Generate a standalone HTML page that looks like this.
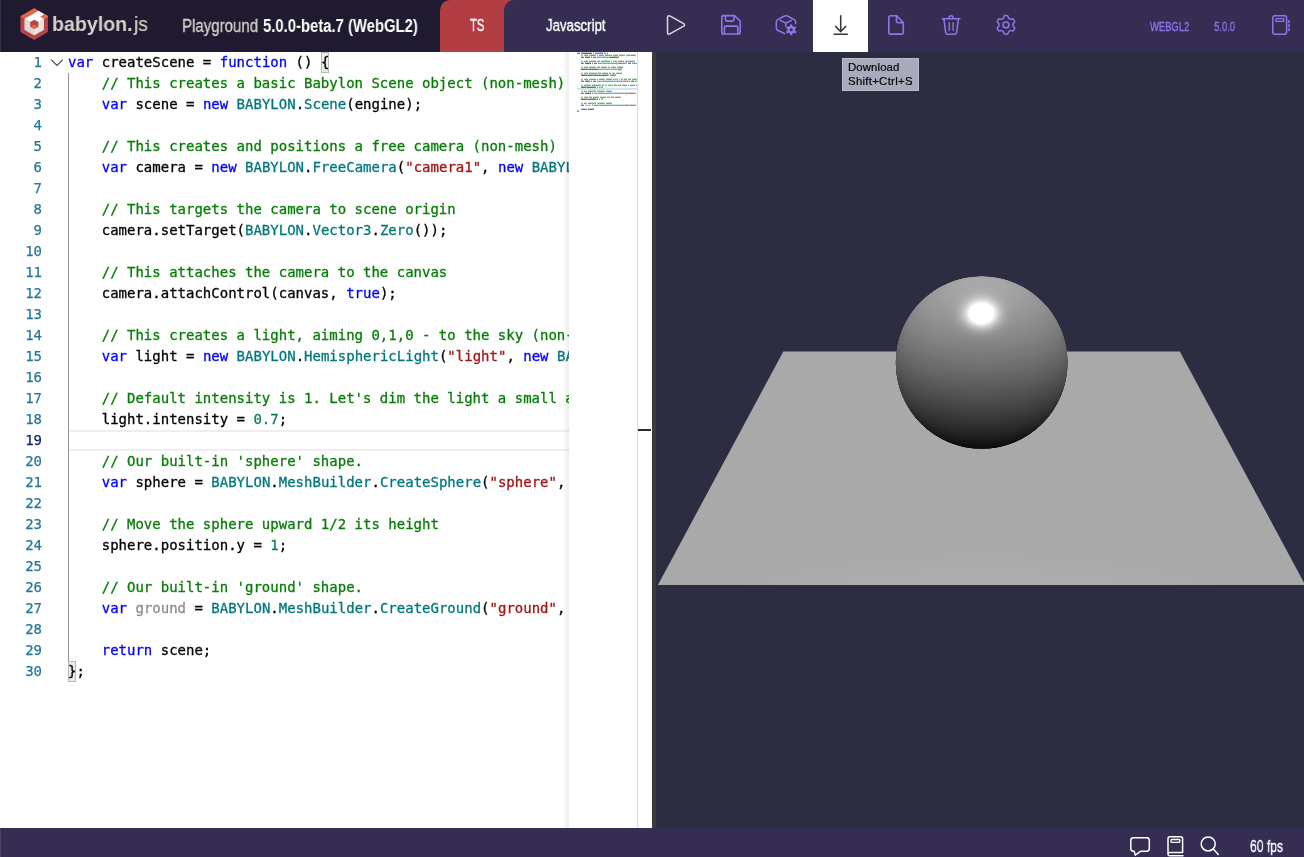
<!DOCTYPE html>
<html lang="en"><head><meta charset="utf-8"><title>Babylon.js Playground</title>
<style>
*{box-sizing:border-box}
html,body{margin:0;padding:0}
body{width:1304px;height:857px;overflow:hidden;background:#fff;position:relative;font-family:"Liberation Sans",sans-serif}
.abs{position:absolute}
#hdr{left:0;top:0;width:1304px;height:52px;background:#1f1a2f}
#ts{left:440px;top:0;width:80px;height:52px;background:#b23e44;border-top-left-radius:10px}
#js{left:504px;top:0;width:800px;height:52px;background:#362d52;border-top-left-radius:10px}
#dl{left:813px;top:0;width:55px;height:52px;background:#fff}
#ftr{left:0;top:828px;width:1304px;height:29px;background:#362d52}
#split{left:652px;top:52px;width:4px;height:776px;background:#3b3b3b}
#canvas{left:656px;top:52px;width:648px;height:776px;background:#2d2d42;overflow:hidden}
.scene{position:absolute;left:0;top:0}
#ed{left:0;top:52px;width:652px;height:776px;background:#fff;overflow:hidden}
#nums{left:0;top:0;width:42px;font:14px/21px "DejaVu Sans Mono",monospace;text-align:right;color:#237893;will-change:transform;-webkit-text-stroke:0.25px}
.num{height:21px}
.num.cur{color:#0b216f}
#code{left:68px;top:0;width:501px;height:776px;overflow:hidden;font:14px/21px "DejaVu Sans Mono",monospace;color:#000;will-change:transform;-webkit-text-stroke:0.3px}
.ln{height:21px;white-space:pre}
.c{color:#087d08}.s{color:#a31515}.n{color:#097d55}.k{color:#0000ff}.t{color:#00787c}.f{color:#8c8c8c}
#guide{left:68px;top:21px;width:1px;height:588px;background:#939393}
#curline{left:68px;top:378px;width:501px;height:21px;border-top:2px solid #eee;border-bottom:2px solid #eee}
.brk{width:8.4px;height:21px;background:#e5efe5;border:1px solid #b9b9b9}
#mmshadow{left:563px;top:0;width:6px;height:776px;background:linear-gradient(to right,rgba(0,0,0,0),rgba(0,0,0,0.07))}
#mm{left:569px;top:0;width:69px;height:776px;background:#fff}
.minimap{position:absolute;left:8px;top:0}
#mmcur{left:8px;top:36px;width:60px;height:2px;background:#cfe3fb}
#mmtext{position:absolute;left:8px;top:0.2px;width:506px;height:360px;overflow:hidden;font:bold 14px/12px "DejaVu Sans Mono",monospace;color:#000;transform-origin:0 0;transform:scale(0.11862,0.16667);will-change:transform;-webkit-text-stroke:0.8px;opacity:0.62}
#mmtext .ln{height:12px}
#ovr{left:637px;top:0;width:15px;height:776px;border-left:1px solid #dcdcdc;background:#fff}
#ovrcur{left:0px;top:377px;width:13px;height:2px;background:#2a2a2a}
.tx{position:absolute;white-space:pre;line-height:1;transform-origin:0 0;display:inline-block;will-change:transform}
#tip{left:842px;top:58px;width:77px;height:33px;background:#aaaabd;border:1px solid #bdbdcc;font:11.4px/14.2px "Liberation Sans",sans-serif;color:#000;padding:1.2px 0 0 4.9px;white-space:pre}
#tip span{display:block;will-change:transform;-webkit-text-stroke:0.2px}
svg.ic{position:absolute;overflow:visible}
</style></head>
<body>
<div id="hdr" class="abs"></div>

<div id="ts" class="abs"></div>
<div id="js" class="abs"></div>
<div id="dl" class="abs"></div>
<div id="ed" class="abs">
 <div id="curline" class="abs"></div>
 <div class="brk abs" style="left:320.9px;top:0"></div>
 <div class="brk abs" style="left:68px;top:609px"></div>
 <div id="nums" class="abs">
<div class="num">1</div>
<div class="num">2</div>
<div class="num">3</div>
<div class="num">4</div>
<div class="num">5</div>
<div class="num">6</div>
<div class="num">7</div>
<div class="num">8</div>
<div class="num">9</div>
<div class="num">10</div>
<div class="num">11</div>
<div class="num">12</div>
<div class="num">13</div>
<div class="num">14</div>
<div class="num">15</div>
<div class="num">16</div>
<div class="num">17</div>
<div class="num">18</div>
<div class="num cur">19</div>
<div class="num">20</div>
<div class="num">21</div>
<div class="num">22</div>
<div class="num">23</div>
<div class="num">24</div>
<div class="num">25</div>
<div class="num">26</div>
<div class="num">27</div>
<div class="num">28</div>
<div class="num">29</div>
<div class="num">30</div>
 </div>
 <div id="guide" class="abs"></div>
 <div id="code" class="abs">
<div class="ln"><span class="k">var</span> createScene = <span class="k">function</span> () {</div>
<div class="ln">    <span class="c">// This creates a basic Babylon Scene object (non-mesh)</span></div>
<div class="ln">    <span class="k">var</span> scene = <span class="k">new</span> <span class="t">BABYLON</span>.<span class="t">Scene</span>(engine);</div>
<div class="ln"></div>
<div class="ln">    <span class="c">// This creates and positions a free camera (non-mesh)</span></div>
<div class="ln">    <span class="k">var</span> camera = <span class="k">new</span> <span class="t">BABYLON</span>.<span class="t">FreeCamera</span>(<span class="s">"camera1"</span>, <span class="k">new</span> <span class="t">BABYLON</span>.<span class="t">Vector3</span>(<span class="n">0</span>, <span class="n">5</span>, -<span class="n">10</span>), scene);</div>
<div class="ln"></div>
<div class="ln">    <span class="c">// This targets the camera to scene origin</span></div>
<div class="ln">    camera.setTarget(<span class="t">BABYLON</span>.<span class="t">Vector3</span>.<span class="t">Zero</span>());</div>
<div class="ln"></div>
<div class="ln">    <span class="c">// This attaches the camera to the canvas</span></div>
<div class="ln">    camera.attachControl(canvas, <span class="k">true</span>);</div>
<div class="ln"></div>
<div class="ln">    <span class="c">// This creates a light, aiming 0,1,0 - to the sky (non-mesh)</span></div>
<div class="ln">    <span class="k">var</span> light = <span class="k">new</span> <span class="t">BABYLON</span>.<span class="t">HemisphericLight</span>(<span class="s">"light"</span>, <span class="k">new</span> <span class="t">BABYLON</span>.<span class="t">Vector3</span>(<span class="n">0</span>, <span class="n">1</span>, <span class="n">0</span>), scene);</div>
<div class="ln"></div>
<div class="ln">    <span class="c">// Default intensity is 1. Let's dim the light a small amount</span></div>
<div class="ln">    light.intensity = <span class="n">0.7</span>;</div>
<div class="ln"></div>
<div class="ln">    <span class="c">// Our built-in 'sphere' shape.</span></div>
<div class="ln">    <span class="k">var</span> sphere = <span class="t">BABYLON</span>.<span class="t">MeshBuilder</span>.<span class="t">CreateSphere</span>(<span class="s">"sphere"</span>, {diameter: <span class="n">2</span>, segments: <span class="n">32</span>}, scene);</div>
<div class="ln"></div>
<div class="ln">    <span class="c">// Move the sphere upward 1/2 its height</span></div>
<div class="ln">    sphere.position.y = <span class="n">1</span>;</div>
<div class="ln"></div>
<div class="ln">    <span class="c">// Our built-in 'ground' shape.</span></div>
<div class="ln">    <span class="k">var</span> <span class="f">ground</span> = <span class="t">BABYLON</span>.<span class="t">MeshBuilder</span>.<span class="t">CreateGround</span>(<span class="s">"ground"</span>, {width: <span class="n">6</span>, height: <span class="n">6</span>}, scene);</div>
<div class="ln"></div>
<div class="ln">    <span class="k">return</span> scene;</div>
<div class="ln">};</div>
 </div>
 <svg class="ic" style="left:50px;top:6px" width="14" height="10" viewBox="0 0 14 10"><path d="M1.2 1.6 L7 7.4 L12.8 1.6" fill="none" stroke="#424242" stroke-width="1.1"/></svg>
 <div id="mmshadow" class="abs"></div>
 <div id="mm" class="abs"><svg class="minimap" width="60" height="776" viewBox="0 0 60 776"><g opacity="0.3"><rect x="0" y="0.4" width="3" height="1.5" fill="#0000ff"/><rect x="4" y="0.4" width="11" height="1.5" fill="#000000"/><rect x="16" y="0.4" width="1" height="1.5" fill="#000000"/><rect x="18" y="0.4" width="8" height="1.5" fill="#0000ff"/><rect x="27" y="0.4" width="2" height="1.5" fill="#000000"/><rect x="30" y="0.4" width="1" height="1.5" fill="#000000"/><rect x="4" y="2.4" width="2" height="1.5" fill="#008000"/><rect x="7" y="2.4" width="4" height="1.5" fill="#008000"/><rect x="12" y="2.4" width="7" height="1.5" fill="#008000"/><rect x="20" y="2.4" width="1" height="1.5" fill="#008000"/><rect x="22" y="2.4" width="5" height="1.5" fill="#008000"/><rect x="28" y="2.4" width="7" height="1.5" fill="#008000"/><rect x="36" y="2.4" width="5" height="1.5" fill="#008000"/><rect x="42" y="2.4" width="6" height="1.5" fill="#008000"/><rect x="49" y="2.4" width="10" height="1.5" fill="#008000"/><rect x="4" y="4.4" width="3" height="1.5" fill="#0000ff"/><rect x="8" y="4.4" width="5" height="1.5" fill="#000000"/><rect x="14" y="4.4" width="1" height="1.5" fill="#000000"/><rect x="16" y="4.4" width="3" height="1.5" fill="#0000ff"/><rect x="20" y="4.4" width="7" height="1.5" fill="#008080"/><rect x="27" y="4.4" width="1" height="1.5" fill="#000000"/><rect x="28" y="4.4" width="5" height="1.5" fill="#008080"/><rect x="33" y="4.4" width="1" height="1.5" fill="#000000"/><rect x="34" y="4.4" width="6" height="1.5" fill="#000000"/><rect x="40" y="4.4" width="2" height="1.5" fill="#000000"/><rect x="4" y="8.4" width="2" height="1.5" fill="#008000"/><rect x="7" y="8.4" width="4" height="1.5" fill="#008000"/><rect x="12" y="8.4" width="7" height="1.5" fill="#008000"/><rect x="20" y="8.4" width="3" height="1.5" fill="#008000"/><rect x="24" y="8.4" width="9" height="1.5" fill="#008000"/><rect x="34" y="8.4" width="1" height="1.5" fill="#008000"/><rect x="36" y="8.4" width="4" height="1.5" fill="#008000"/><rect x="41" y="8.4" width="6" height="1.5" fill="#008000"/><rect x="48" y="8.4" width="10" height="1.5" fill="#008000"/><rect x="4" y="10.4" width="3" height="1.5" fill="#0000ff"/><rect x="8" y="10.4" width="6" height="1.5" fill="#000000"/><rect x="15" y="10.4" width="1" height="1.5" fill="#000000"/><rect x="17" y="10.4" width="3" height="1.5" fill="#0000ff"/><rect x="21" y="10.4" width="7" height="1.5" fill="#008080"/><rect x="28" y="10.4" width="1" height="1.5" fill="#000000"/><rect x="29" y="10.4" width="10" height="1.5" fill="#008080"/><rect x="39" y="10.4" width="1" height="1.5" fill="#000000"/><rect x="40" y="10.4" width="9" height="1.5" fill="#a31515"/><rect x="49" y="10.4" width="1" height="1.5" fill="#000000"/><rect x="51" y="10.4" width="3" height="1.5" fill="#0000ff"/><rect x="55" y="10.4" width="5" height="1.5" fill="#008080"/><rect x="4" y="14.4" width="2" height="1.5" fill="#008000"/><rect x="7" y="14.4" width="4" height="1.5" fill="#008000"/><rect x="12" y="14.4" width="7" height="1.5" fill="#008000"/><rect x="20" y="14.4" width="3" height="1.5" fill="#008000"/><rect x="24" y="14.4" width="6" height="1.5" fill="#008000"/><rect x="31" y="14.4" width="2" height="1.5" fill="#008000"/><rect x="34" y="14.4" width="5" height="1.5" fill="#008000"/><rect x="40" y="14.4" width="6" height="1.5" fill="#008000"/><rect x="4" y="16.4" width="6" height="1.5" fill="#000000"/><rect x="10" y="16.4" width="1" height="1.5" fill="#000000"/><rect x="11" y="16.4" width="9" height="1.5" fill="#000000"/><rect x="20" y="16.4" width="1" height="1.5" fill="#000000"/><rect x="21" y="16.4" width="7" height="1.5" fill="#008080"/><rect x="28" y="16.4" width="1" height="1.5" fill="#000000"/><rect x="29" y="16.4" width="7" height="1.5" fill="#008080"/><rect x="36" y="16.4" width="1" height="1.5" fill="#000000"/><rect x="37" y="16.4" width="4" height="1.5" fill="#008080"/><rect x="41" y="16.4" width="4" height="1.5" fill="#000000"/><rect x="4" y="20.4" width="2" height="1.5" fill="#008000"/><rect x="7" y="20.4" width="4" height="1.5" fill="#008000"/><rect x="12" y="20.4" width="8" height="1.5" fill="#008000"/><rect x="21" y="20.4" width="3" height="1.5" fill="#008000"/><rect x="25" y="20.4" width="6" height="1.5" fill="#008000"/><rect x="32" y="20.4" width="2" height="1.5" fill="#008000"/><rect x="35" y="20.4" width="3" height="1.5" fill="#008000"/><rect x="39" y="20.4" width="6" height="1.5" fill="#008000"/><rect x="4" y="22.4" width="6" height="1.5" fill="#000000"/><rect x="10" y="22.4" width="1" height="1.5" fill="#000000"/><rect x="11" y="22.4" width="13" height="1.5" fill="#000000"/><rect x="24" y="22.4" width="1" height="1.5" fill="#000000"/><rect x="25" y="22.4" width="6" height="1.5" fill="#000000"/><rect x="31" y="22.4" width="1" height="1.5" fill="#000000"/><rect x="33" y="22.4" width="4" height="1.5" fill="#0000ff"/><rect x="37" y="22.4" width="2" height="1.5" fill="#000000"/><rect x="4" y="26.4" width="2" height="1.5" fill="#008000"/><rect x="7" y="26.4" width="4" height="1.5" fill="#008000"/><rect x="12" y="26.4" width="7" height="1.5" fill="#008000"/><rect x="20" y="26.4" width="1" height="1.5" fill="#008000"/><rect x="22" y="26.4" width="6" height="1.5" fill="#008000"/><rect x="29" y="26.4" width="6" height="1.5" fill="#008000"/><rect x="36" y="26.4" width="5" height="1.5" fill="#008000"/><rect x="42" y="26.4" width="1" height="1.5" fill="#008000"/><rect x="44" y="26.4" width="2" height="1.5" fill="#008000"/><rect x="47" y="26.4" width="3" height="1.5" fill="#008000"/><rect x="51" y="26.4" width="3" height="1.5" fill="#008000"/><rect x="55" y="26.4" width="5" height="1.5" fill="#008000"/><rect x="4" y="28.4" width="3" height="1.5" fill="#0000ff"/><rect x="8" y="28.4" width="5" height="1.5" fill="#000000"/><rect x="14" y="28.4" width="1" height="1.5" fill="#000000"/><rect x="16" y="28.4" width="3" height="1.5" fill="#0000ff"/><rect x="20" y="28.4" width="7" height="1.5" fill="#008080"/><rect x="27" y="28.4" width="1" height="1.5" fill="#000000"/><rect x="28" y="28.4" width="16" height="1.5" fill="#008080"/><rect x="44" y="28.4" width="1" height="1.5" fill="#000000"/><rect x="45" y="28.4" width="7" height="1.5" fill="#a31515"/><rect x="52" y="28.4" width="1" height="1.5" fill="#000000"/><rect x="54" y="28.4" width="3" height="1.5" fill="#0000ff"/><rect x="58" y="28.4" width="2" height="1.5" fill="#008080"/><rect x="4" y="32.4" width="2" height="1.5" fill="#008000"/><rect x="7" y="32.4" width="7" height="1.5" fill="#008000"/><rect x="15" y="32.4" width="9" height="1.5" fill="#008000"/><rect x="25" y="32.4" width="2" height="1.5" fill="#008000"/><rect x="28" y="32.4" width="2" height="1.5" fill="#008000"/><rect x="31" y="32.4" width="5" height="1.5" fill="#008000"/><rect x="37" y="32.4" width="3" height="1.5" fill="#008000"/><rect x="41" y="32.4" width="3" height="1.5" fill="#008000"/><rect x="45" y="32.4" width="5" height="1.5" fill="#008000"/><rect x="51" y="32.4" width="1" height="1.5" fill="#008000"/><rect x="53" y="32.4" width="5" height="1.5" fill="#008000"/><rect x="59" y="32.4" width="1" height="1.5" fill="#008000"/><rect x="4" y="34.4" width="5" height="1.5" fill="#000000"/><rect x="9" y="34.4" width="1" height="1.5" fill="#000000"/><rect x="10" y="34.4" width="9" height="1.5" fill="#000000"/><rect x="20" y="34.4" width="1" height="1.5" fill="#000000"/><rect x="22" y="34.4" width="3" height="1.5" fill="#098658"/><rect x="25" y="34.4" width="1" height="1.5" fill="#000000"/><rect x="4" y="38.4" width="2" height="1.5" fill="#008000"/><rect x="7" y="38.4" width="3" height="1.5" fill="#008000"/><rect x="11" y="38.4" width="8" height="1.5" fill="#008000"/><rect x="20" y="38.4" width="8" height="1.5" fill="#008000"/><rect x="29" y="38.4" width="6" height="1.5" fill="#008000"/><rect x="4" y="40.4" width="3" height="1.5" fill="#0000ff"/><rect x="8" y="40.4" width="6" height="1.5" fill="#000000"/><rect x="15" y="40.4" width="1" height="1.5" fill="#000000"/><rect x="17" y="40.4" width="7" height="1.5" fill="#008080"/><rect x="24" y="40.4" width="1" height="1.5" fill="#000000"/><rect x="25" y="40.4" width="11" height="1.5" fill="#008080"/><rect x="36" y="40.4" width="1" height="1.5" fill="#000000"/><rect x="37" y="40.4" width="12" height="1.5" fill="#008080"/><rect x="49" y="40.4" width="1" height="1.5" fill="#000000"/><rect x="50" y="40.4" width="8" height="1.5" fill="#a31515"/><rect x="58" y="40.4" width="1" height="1.5" fill="#000000"/><rect x="4" y="44.4" width="2" height="1.5" fill="#008000"/><rect x="7" y="44.4" width="4" height="1.5" fill="#008000"/><rect x="12" y="44.4" width="3" height="1.5" fill="#008000"/><rect x="16" y="44.4" width="6" height="1.5" fill="#008000"/><rect x="23" y="44.4" width="6" height="1.5" fill="#008000"/><rect x="30" y="44.4" width="3" height="1.5" fill="#008000"/><rect x="34" y="44.4" width="3" height="1.5" fill="#008000"/><rect x="38" y="44.4" width="6" height="1.5" fill="#008000"/><rect x="4" y="46.4" width="6" height="1.5" fill="#000000"/><rect x="10" y="46.4" width="1" height="1.5" fill="#000000"/><rect x="11" y="46.4" width="8" height="1.5" fill="#000000"/><rect x="19" y="46.4" width="1" height="1.5" fill="#000000"/><rect x="20" y="46.4" width="1" height="1.5" fill="#000000"/><rect x="22" y="46.4" width="1" height="1.5" fill="#000000"/><rect x="24" y="46.4" width="1" height="1.5" fill="#098658"/><rect x="25" y="46.4" width="1" height="1.5" fill="#000000"/><rect x="4" y="50.4" width="2" height="1.5" fill="#008000"/><rect x="7" y="50.4" width="3" height="1.5" fill="#008000"/><rect x="11" y="50.4" width="8" height="1.5" fill="#008000"/><rect x="20" y="50.4" width="8" height="1.5" fill="#008000"/><rect x="29" y="50.4" width="6" height="1.5" fill="#008000"/><rect x="4" y="52.4" width="3" height="1.5" fill="#0000ff"/><rect x="8" y="52.4" width="6" height="1.5" fill="#8c8c8c"/><rect x="15" y="52.4" width="1" height="1.5" fill="#000000"/><rect x="17" y="52.4" width="7" height="1.5" fill="#008080"/><rect x="24" y="52.4" width="1" height="1.5" fill="#000000"/><rect x="25" y="52.4" width="11" height="1.5" fill="#008080"/><rect x="36" y="52.4" width="1" height="1.5" fill="#000000"/><rect x="37" y="52.4" width="12" height="1.5" fill="#008080"/><rect x="49" y="52.4" width="1" height="1.5" fill="#000000"/><rect x="50" y="52.4" width="8" height="1.5" fill="#a31515"/><rect x="58" y="52.4" width="1" height="1.5" fill="#000000"/><rect x="4" y="56.4" width="6" height="1.5" fill="#0000ff"/><rect x="11" y="56.4" width="5" height="1.5" fill="#000000"/><rect x="16" y="56.4" width="1" height="1.5" fill="#000000"/><rect x="0" y="58.4" width="2" height="1.5" fill="#000000"/></g></svg><div id="mmcur" class="abs"></div><div id="mmtext" aria-hidden="true"><div class="ln"><span class="k">var</span> createScene = <span class="k">function</span> () {</div><div class="ln">    <span class="c">// This creates a basic Babylon Scene object (non-mesh)</span></div><div class="ln">    <span class="k">var</span> scene = <span class="k">new</span> <span class="t">BABYLON</span>.<span class="t">Scene</span>(engine);</div><div class="ln"></div><div class="ln">    <span class="c">// This creates and positions a free camera (non-mesh)</span></div><div class="ln">    <span class="k">var</span> camera = <span class="k">new</span> <span class="t">BABYLON</span>.<span class="t">FreeCamera</span>(<span class="s">"camera1"</span>, <span class="k">new</span> <span class="t">BABYL</span></div><div class="ln"></div><div class="ln">    <span class="c">// This targets the camera to scene origin</span></div><div class="ln">    camera.setTarget(<span class="t">BABYLON</span>.<span class="t">Vector3</span>.<span class="t">Zero</span>());</div><div class="ln"></div><div class="ln">    <span class="c">// This attaches the camera to the canvas</span></div><div class="ln">    camera.attachControl(canvas, <span class="k">true</span>);</div><div class="ln"></div><div class="ln">    <span class="c">// This creates a light, aiming 0,1,0 - to the sky (non-</span></div><div class="ln">    <span class="k">var</span> light = <span class="k">new</span> <span class="t">BABYLON</span>.<span class="t">HemisphericLight</span>(<span class="s">"light"</span>, <span class="k">new</span> <span class="t">BA</span></div><div class="ln"></div><div class="ln">    <span class="c">// Default intensity is 1. Let's dim the light a small a</span></div><div class="ln">    light.intensity = <span class="n">0.7</span>;</div><div class="ln"></div><div class="ln">    <span class="c">// Our built-in 'sphere' shape.</span></div><div class="ln">    <span class="k">var</span> sphere = <span class="t">BABYLON</span>.<span class="t">MeshBuilder</span>.<span class="t">CreateSphere</span>(<span class="s">"sphere"</span>, </div><div class="ln"></div><div class="ln">    <span class="c">// Move the sphere upward 1/2 its height</span></div><div class="ln">    sphere.position.y = <span class="n">1</span>;</div><div class="ln"></div><div class="ln">    <span class="c">// Our built-in 'ground' shape.</span></div><div class="ln">    <span class="k">var</span> <span class="f">ground</span> = <span class="t">BABYLON</span>.<span class="t">MeshBuilder</span>.<span class="t">CreateGround</span>(<span class="s">"ground"</span>, </div><div class="ln"></div><div class="ln">    <span class="k">return</span> scene;</div><div class="ln">};</div></div></div>
 <div id="ovr" class="abs"><div id="ovrcur" class="abs"></div></div>
</div>
<div id="split" class="abs"></div>
<div id="canvas" class="abs"><svg class="scene" width="648" height="776" viewBox="0 0 648 776"><defs><clipPath id="sc"><ellipse cx="325.65" cy="310.60" rx="85.80" ry="86.20"/></clipPath><radialGradient id="hl" cx="0.5" cy="0.5" r="0.5"><stop offset="0.000" stop-color="#fff" stop-opacity="1.000"/><stop offset="0.059" stop-color="#fff" stop-opacity="1.000"/><stop offset="0.118" stop-color="#fff" stop-opacity="1.000"/><stop offset="0.176" stop-color="#fff" stop-opacity="1.000"/><stop offset="0.235" stop-color="#fff" stop-opacity="1.000"/><stop offset="0.294" stop-color="#fff" stop-opacity="1.000"/><stop offset="0.353" stop-color="#fff" stop-opacity="1.000"/><stop offset="0.412" stop-color="#fff" stop-opacity="0.799"/><stop offset="0.471" stop-color="#fff" stop-opacity="0.611"/><stop offset="0.529" stop-color="#fff" stop-opacity="0.450"/><stop offset="0.588" stop-color="#fff" stop-opacity="0.318"/><stop offset="0.647" stop-color="#fff" stop-opacity="0.216"/><stop offset="0.706" stop-color="#fff" stop-opacity="0.140"/><stop offset="0.765" stop-color="#fff" stop-opacity="0.087"/><stop offset="0.824" stop-color="#fff" stop-opacity="0.052"/><stop offset="0.882" stop-color="#fff" stop-opacity="0.029"/><stop offset="0.941" stop-color="#fff" stop-opacity="0.016"/><stop offset="1.000" stop-color="#fff" stop-opacity="0.008"/></radialGradient><radialGradient id="gs" cx="0.5" cy="0.5" r="0.5"><stop offset="0" stop-color="#aeaeae"/><stop offset="0.8" stop-color="#acacac"/><stop offset="1" stop-color="#a9a9a9"/></radialGradient><clipPath id="gc"><polygon points="127.3,299.5 523.8,299.5 649.3,533.1 1.9,533.1"/></clipPath></defs><polygon points="127.3,299.5 523.8,299.5 649.3,533.1 1.9,533.1" fill="#a9a9a9"/><ellipse cx="324" cy="590" rx="335" ry="94" fill="url(#gs)" clip-path="url(#gc)"/><g clip-path="url(#sc)"><circle cx="325.6" cy="310.5" r="86.9" fill="#060606"/><ellipse cx="325.6" cy="382.84" rx="36.76" ry="14.03" fill="#080808"/><ellipse cx="325.6" cy="381.14" rx="40.49" ry="15.41" fill="#0a0a0a"/><ellipse cx="325.6" cy="379.43" rx="43.82" ry="16.65" fill="#0c0c0c"/><ellipse cx="325.6" cy="377.72" rx="46.84" ry="17.77" fill="#0d0d0d"/><ellipse cx="325.6" cy="376.01" rx="49.60" ry="18.80" fill="#0f0f0f"/><ellipse cx="325.6" cy="374.30" rx="52.15" ry="19.74" fill="#111111"/><ellipse cx="325.6" cy="372.59" rx="54.52" ry="20.62" fill="#131313"/><ellipse cx="325.6" cy="370.88" rx="56.72" ry="21.44" fill="#151515"/><ellipse cx="325.6" cy="369.17" rx="58.79" ry="22.21" fill="#161616"/><ellipse cx="325.6" cy="367.46" rx="60.72" ry="22.93" fill="#181818"/><ellipse cx="325.6" cy="365.75" rx="62.55" ry="23.60" fill="#1a1a1a"/><ellipse cx="325.6" cy="364.05" rx="64.26" ry="24.24" fill="#1c1c1c"/><ellipse cx="325.6" cy="362.34" rx="65.88" ry="24.84" fill="#1e1e1e"/><ellipse cx="325.6" cy="360.63" rx="67.41" ry="25.41" fill="#1f1f1f"/><ellipse cx="325.6" cy="358.92" rx="68.86" ry="25.95" fill="#212121"/><ellipse cx="325.6" cy="357.21" rx="70.23" ry="26.46" fill="#232323"/><ellipse cx="325.6" cy="355.50" rx="71.52" ry="26.94" fill="#252525"/><ellipse cx="325.6" cy="353.79" rx="72.74" ry="27.39" fill="#272727"/><ellipse cx="325.6" cy="352.08" rx="73.90" ry="27.82" fill="#292929"/><ellipse cx="325.6" cy="350.37" rx="74.99" ry="28.23" fill="#2a2a2a"/><ellipse cx="325.6" cy="348.66" rx="76.03" ry="28.61" fill="#2c2c2c"/><ellipse cx="325.6" cy="346.96" rx="77.00" ry="28.97" fill="#2e2e2e"/><ellipse cx="325.6" cy="345.25" rx="77.92" ry="29.31" fill="#303030"/><ellipse cx="325.6" cy="343.54" rx="78.78" ry="29.64" fill="#323232"/><ellipse cx="325.6" cy="341.83" rx="79.60" ry="29.94" fill="#333333"/><ellipse cx="325.6" cy="340.12" rx="80.36" ry="30.22" fill="#353535"/><ellipse cx="325.6" cy="338.41" rx="81.07" ry="30.48" fill="#373737"/><ellipse cx="325.6" cy="336.70" rx="81.73" ry="30.73" fill="#393939"/><ellipse cx="325.6" cy="334.99" rx="82.35" ry="30.96" fill="#3b3b3b"/><ellipse cx="325.6" cy="333.28" rx="82.92" ry="31.17" fill="#3d3d3d"/><ellipse cx="325.6" cy="331.57" rx="83.45" ry="31.37" fill="#3e3e3e"/><ellipse cx="325.6" cy="329.87" rx="83.93" ry="31.55" fill="#404040"/><ellipse cx="325.6" cy="328.16" rx="84.37" ry="31.71" fill="#424242"/><ellipse cx="325.6" cy="326.45" rx="84.77" ry="31.86" fill="#444444"/><ellipse cx="325.6" cy="324.74" rx="85.12" ry="31.99" fill="#464646"/><ellipse cx="325.6" cy="323.03" rx="85.43" ry="32.10" fill="#474747"/><ellipse cx="325.6" cy="321.32" rx="85.71" ry="32.21" fill="#494949"/><ellipse cx="325.6" cy="319.61" rx="85.94" ry="32.29" fill="#4b4b4b"/><ellipse cx="325.6" cy="317.90" rx="86.13" ry="32.36" fill="#4d4d4d"/><ellipse cx="325.6" cy="316.19" rx="86.28" ry="32.42" fill="#4f4f4f"/><ellipse cx="325.6" cy="314.48" rx="86.39" ry="32.46" fill="#515151"/><ellipse cx="325.6" cy="312.78" rx="86.47" ry="32.49" fill="#525252"/><ellipse cx="325.6" cy="311.07" rx="86.50" ry="32.50" fill="#545454"/><ellipse cx="325.6" cy="309.36" rx="86.49" ry="32.50" fill="#565656"/><ellipse cx="325.6" cy="307.65" rx="86.45" ry="32.48" fill="#585858"/><ellipse cx="325.6" cy="305.94" rx="86.36" ry="32.45" fill="#5a5a5a"/><ellipse cx="325.6" cy="304.23" rx="86.23" ry="32.40" fill="#5b5b5b"/><ellipse cx="325.6" cy="302.52" rx="86.07" ry="32.34" fill="#5d5d5d"/><ellipse cx="325.6" cy="300.81" rx="85.86" ry="32.26" fill="#5f5f5f"/><ellipse cx="325.6" cy="299.10" rx="85.62" ry="32.17" fill="#616161"/><ellipse cx="325.6" cy="297.39" rx="85.33" ry="32.07" fill="#636363"/><ellipse cx="325.6" cy="295.69" rx="85.01" ry="31.95" fill="#656565"/><ellipse cx="325.6" cy="293.98" rx="84.64" ry="31.81" fill="#666666"/><ellipse cx="325.6" cy="292.27" rx="84.23" ry="31.66" fill="#686868"/><ellipse cx="325.6" cy="290.56" rx="83.77" ry="31.49" fill="#6a6a6a"/><ellipse cx="325.6" cy="288.85" rx="83.27" ry="31.30" fill="#6c6c6c"/><ellipse cx="325.6" cy="287.14" rx="82.73" ry="31.10" fill="#6e6e6e"/><ellipse cx="325.6" cy="285.43" rx="82.15" ry="30.88" fill="#6f6f6f"/><ellipse cx="325.6" cy="283.72" rx="81.51" ry="30.65" fill="#717171"/><ellipse cx="325.6" cy="282.01" rx="80.83" ry="30.40" fill="#737373"/><ellipse cx="325.6" cy="280.30" rx="80.11" ry="30.13" fill="#757575"/><ellipse cx="325.6" cy="278.60" rx="79.33" ry="29.84" fill="#777777"/><ellipse cx="325.6" cy="276.89" rx="78.50" ry="29.53" fill="#797979"/><ellipse cx="325.6" cy="275.18" rx="77.62" ry="29.20" fill="#7a7a7a"/><ellipse cx="325.6" cy="273.47" rx="76.68" ry="28.85" fill="#7c7c7c"/><ellipse cx="325.6" cy="271.76" rx="75.69" ry="28.48" fill="#7e7e7e"/><ellipse cx="325.6" cy="270.05" rx="74.63" ry="28.09" fill="#808080"/><ellipse cx="325.6" cy="268.34" rx="73.52" ry="27.68" fill="#828282"/><ellipse cx="325.6" cy="266.63" rx="72.34" ry="27.24" fill="#838383"/><ellipse cx="325.6" cy="264.92" rx="71.09" ry="26.78" fill="#858585"/><ellipse cx="325.6" cy="263.21" rx="69.77" ry="26.29" fill="#878787"/><ellipse cx="325.6" cy="261.51" rx="68.38" ry="25.77" fill="#898989"/><ellipse cx="325.6" cy="259.80" rx="66.91" ry="25.22" fill="#8b8b8b"/><ellipse cx="325.6" cy="258.09" rx="65.35" ry="24.65" fill="#8d8d8d"/><ellipse cx="325.6" cy="256.38" rx="63.70" ry="24.03" fill="#8e8e8e"/><ellipse cx="325.6" cy="254.67" rx="61.94" ry="23.38" fill="#909090"/><ellipse cx="325.6" cy="252.96" rx="60.08" ry="22.69" fill="#929292"/><ellipse cx="325.6" cy="251.25" rx="58.10" ry="21.96" fill="#949494"/><ellipse cx="325.6" cy="249.54" rx="55.99" ry="21.17" fill="#969696"/><ellipse cx="325.6" cy="247.83" rx="53.74" ry="20.33" fill="#979797"/><ellipse cx="325.6" cy="246.12" rx="51.31" ry="19.43" fill="#999999"/><ellipse cx="325.6" cy="244.42" rx="48.69" ry="18.46" fill="#9b9b9b"/><ellipse cx="325.6" cy="242.71" rx="45.85" ry="17.40" fill="#9d9d9d"/><ellipse cx="325.6" cy="241.00" rx="42.74" ry="16.25" fill="#9f9f9f"/><ellipse cx="325.6" cy="239.29" rx="39.28" ry="14.97" fill="#a0a0a0"/><ellipse cx="325.6" cy="237.58" rx="35.39" ry="13.52" fill="#a2a2a2"/><ellipse cx="325.6" cy="235.87" rx="30.90" ry="11.85" fill="#a4a4a4"/><ellipse cx="325.6" cy="234.16" rx="25.48" ry="9.84" fill="#a6a6a6"/><ellipse cx="325.6" cy="232.45" rx="18.29" ry="7.17" fill="#a8a8a8"/><ellipse cx="325.5" cy="261.4" rx="34.0" ry="28.2" fill="url(#hl)"/></g></svg></div>
<div id="ftr" class="abs"></div>
<div id="tip" class="abs"><span style="letter-spacing:0.1px">Download</span><span style="letter-spacing:0.28px">Shift+Ctrl+S</span></div>
<svg class="ic" style="left:0;top:0" width="1304" height="857" viewBox="0 0 1304 857">
<polygon points="34.20,8.35 47.93,16.27 47.93,32.12 34.20,40.05 20.47,32.12 20.47,16.27" fill="#ba434a"/>
<polygon points="34.20,8.35 20.47,16.27 24.67,18.70 38.40,10.78" fill="#e2664a"/>
<polygon points="24.67,18.70 38.40,10.78 47.93,16.27 43.73,18.70 34.20,24.20" fill="#ffffff"/>
<polygon points="47.93,16.27 44.38,14.22 40.18,16.65 43.73,18.70" fill="#e2664a"/>
<polygon points="24.67,18.70 34.20,24.20 43.73,18.70 43.73,29.70 34.20,35.20 24.67,29.70" fill="#dcdad3"/>
<polygon points="24.67,18.70 34.20,24.20 34.20,35.20 24.67,29.70" fill="#dcdad3"/>
<polygon points="34.20,24.20 43.73,18.70 43.73,29.70 34.20,35.20" fill="#e7e5df"/>
<polygon points="34.30,19.70 38.37,22.05 38.37,26.75 34.30,29.10 30.23,26.75 30.23,22.05" fill="#ba434a"/>
<polygon points="34.30,24.40 38.37,26.75 34.30,29.10 30.23,26.75" fill="#e2664a"/>
<path d="M667.50 17.80 Q667.50 14.60 670.30 16.16 L683.20 23.34 Q686.00 24.90 683.20 26.46 L670.30 33.64 Q667.50 35.20 667.50 32.00 Z" fill="none" stroke="#ddd9e0" stroke-width="1.5"/>
<path d="M723.8 15.6 H734.6 L740.2 21.2 V32.2 Q740.2 34 738.4 34 H723.6 Q721.8 34 721.8 32.2 V17.6 Q721.8 15.6 723.8 15.6 Z" fill="none" stroke="#8d77ec" stroke-width="1.6" stroke-linejoin="round" stroke-linecap="round"/>
<path d="M725.4 15.8 V19.6 Q725.4 21.1 726.9 21.1 H732.5 Q734 21.1 734 19.6 V15.8" fill="none" stroke="#8d77ec" stroke-width="1.6" stroke-linejoin="round" stroke-linecap="round"/>
<path d="M724.4 33.8 V27.6 Q724.4 26.1 725.9 26.1 H736.3 Q737.8 26.1 737.8 27.6 V33.8" fill="none" stroke="#8d77ec" stroke-width="1.6" stroke-linejoin="round" stroke-linecap="round"/>
<g><clipPath id="cgc"><path d="M770 10 H800 V24.2 H791 L785.3 27 V40 H770 Z"/></clipPath><path clip-path="url(#cgc)" d="M784.58 16.03 Q786.00 15.30 787.42 16.03 L794.28 19.57 Q795.70 20.30 795.70 21.90 L795.70 27.90 Q795.70 29.50 794.27 30.22 L787.43 33.68 Q786.00 34.40 784.57 33.68 L777.73 30.22 Q776.30 29.50 776.30 27.90 L776.30 21.90 Q776.30 20.30 777.72 19.57 Z" fill="none" stroke="#8d77ec" stroke-width="1.5"/></g>
<path d="M780.3 20.4 L785.8 23.1 L791.4 20.4 M785.8 23.1 V26.2" fill="none" stroke="#8d77ec" stroke-width="1.5" stroke-linecap="round"/>
<path d="M789.52 26.35 Q789.96 26.10 790.05 25.61 L790.23 24.76 Q790.32 24.27 790.82 24.27 L791.58 24.27 Q792.08 24.27 792.17 24.76 L792.35 25.61 Q792.44 26.10 792.88 26.35 L793.35 26.62 Q793.78 26.87 794.25 26.71 L795.08 26.44 Q795.55 26.28 795.80 26.71 L796.18 27.36 Q796.43 27.79 796.05 28.12 L795.40 28.70 Q795.02 29.03 795.02 29.53 L795.02 30.07 Q795.02 30.57 795.40 30.90 L796.05 31.48 Q796.43 31.81 796.18 32.24 L795.80 32.89 Q795.55 33.32 795.08 33.16 L794.25 32.89 Q793.78 32.73 793.35 32.98 L792.88 33.25 Q792.44 33.50 792.35 33.99 L792.17 34.84 Q792.08 35.33 791.58 35.33 L790.82 35.33 Q790.32 35.33 790.23 34.84 L790.05 33.99 Q789.96 33.50 789.52 33.25 L789.05 32.98 Q788.62 32.73 788.15 32.89 L787.32 33.16 Q786.85 33.32 786.60 32.89 L786.22 32.24 Q785.97 31.81 786.35 31.48 L787.00 30.90 Q787.38 30.57 787.38 30.07 L787.38 29.53 Q787.38 29.03 787.00 28.70 L786.35 28.12 Q785.97 27.79 786.22 27.36 L786.60 26.71 Q786.85 26.28 787.32 26.44 L788.15 26.71 Q788.62 26.87 789.05 26.62 Z M792.75 29.8 A1.55 1.55 0 1 0 789.65 29.8 A1.55 1.55 0 1 0 792.75 29.8 Z" fill="#8d77ec" fill-rule="evenodd"/>
<path d="M840.7 15.2 V31.6 M835.2 26 L840.7 31.6 L846.2 26 M833.6 34.2 H847.9" fill="none" stroke="#333333" stroke-width="1.5" stroke-linecap="butt"/>
<path d="M890.5 15.8 H896.6 L903.3 22.6 V32.4 Q903.3 34.1 901.6 34.1 H890.5 Q888.8 34.1 888.8 32.4 V17.5 Q888.8 15.8 890.5 15.8 Z" fill="none" stroke="#8d77ec" stroke-width="1.6" stroke-linejoin="round" stroke-linecap="round"/>
<path d="M896.5 16 V21 Q896.5 22.7 898.2 22.7 H903.2" fill="none" stroke="#8d77ec" stroke-width="1.6" stroke-linejoin="round" stroke-linecap="round"/>
<path d="M942.4 18.8 H959.9 M948.9 18.6 A2.2 2.9 0 0 1 953.3 18.6 M943.9 19.2 L945.7 32.6 Q945.95 34.2 947.6 34.2 H954.7 Q956.35 34.2 956.6 32.6 L958.4 19.2" fill="none" stroke="#8d77ec" stroke-width="1.5" stroke-linecap="round" stroke-linejoin="round"/>
<path d="M949.25 22.6 V30.4 M953.05 22.6 V30.4" fill="none" stroke="#8d77ec" stroke-width="1.3" stroke-linecap="round"/>
<path d="M1002.64 18.77 Q1003.59 18.22 1003.77 17.13 L1003.85 16.69 Q1004.02 15.61 1005.12 15.61 L1006.88 15.61 Q1007.98 15.61 1008.15 16.69 L1008.23 17.13 Q1008.41 18.22 1009.36 18.77 L1009.63 18.93 Q1010.58 19.48 1011.61 19.09 L1012.03 18.93 Q1013.06 18.54 1013.61 19.50 L1014.49 21.01 Q1015.04 21.96 1014.18 22.66 L1013.84 22.95 Q1012.99 23.64 1012.99 24.74 L1012.99 25.06 Q1012.99 26.16 1013.84 26.85 L1014.18 27.14 Q1015.04 27.84 1014.49 28.79 L1013.61 30.30 Q1013.06 31.26 1012.03 30.87 L1011.61 30.71 Q1010.58 30.32 1009.63 30.87 L1009.36 31.03 Q1008.41 31.58 1008.23 32.67 L1008.15 33.11 Q1007.98 34.19 1006.88 34.19 L1005.12 34.19 Q1004.02 34.19 1003.85 33.11 L1003.77 32.67 Q1003.59 31.58 1002.64 31.03 L1002.37 30.87 Q1001.42 30.32 1000.39 30.71 L999.97 30.87 Q998.94 31.26 998.39 30.30 L997.51 28.79 Q996.96 27.84 997.82 27.14 L998.16 26.85 Q999.01 26.16 999.01 25.06 L999.01 24.74 Q999.01 23.64 998.16 22.95 L997.82 22.66 Q996.96 21.96 997.51 21.01 L998.39 19.50 Q998.94 18.54 999.97 18.93 L1000.39 19.09 Q1001.42 19.48 1002.37 18.93 Z" fill="none" stroke="#8d77ec" stroke-width="1.5"/>
<circle cx="1006" cy="24.9" r="2.9" fill="none" stroke="#8d77ec" stroke-width="1.5"/>
<rect x="1272.8" y="15.8" width="13.8" height="18.4" rx="2.2" fill="none" stroke="#8d77ec" stroke-width="1.5" stroke-linecap="round" stroke-linejoin="round"/>
<rect x="1275.9" y="18.6" width="7.8" height="2.7" rx="0.6" fill="none" stroke="#8d77ec" stroke-width="1.3"/>
<path d="M1289 20.6 V22.4 M1289 24.4 V26.6 M1289 28.6 V30.4" fill="none" stroke="#8d77ec" stroke-width="1.5" stroke-linecap="round"/>
<path d="M1133.4 837.7 H1146.7 Q1149.3 837.7 1149.3 840.3 V848.6 Q1149.3 851.2 1146.7 851.2 H1140.8 L1135.3 855.1 L1134.2 851.2 H1133.4 Q1130.8 851.2 1130.8 848.6 V840.3 Q1130.8 837.7 1133.4 837.7 Z" fill="none" stroke="#ffffff" stroke-width="1.5" stroke-linejoin="round" stroke-linecap="round"/>
<path d="M1168 854.2 V838.8 Q1168 836.8 1170 836.8 H1180.6 Q1182.6 836.8 1182.6 838.8 V852.6 H1169.6 Q1168 852.6 1168 854.2 Q1168 855.8 1169.6 855.8 H1183" fill="none" stroke="#ffffff" stroke-width="1.5" stroke-linejoin="round" stroke-linecap="round"/>
<rect x="1170.9" y="839.5" width="9" height="2.8" rx="1" fill="none" stroke="#ffffff" stroke-width="1.3"/>
<circle cx="1208.2" cy="843.9" r="7" fill="none" stroke="#ffffff" stroke-width="1.5"/>
<path d="M1213.3 849 L1218.3 854.4" fill="none" stroke="#ffffff" stroke-width="1.5" stroke-linejoin="round" stroke-linecap="round"/>
</svg>
<span class="tx" id="logo1" style="left:52.20px;top:14.49px;font-size:20.10px;font-weight:bold;color:#d5d2ca;transform:scaleX(0.9750)">babylon.</span><span class="tx" id="logo2" style="left:133.60px;top:14.49px;font-size:20.10px;font-weight:normal;color:#d5d2ca;transform:scaleX(0.9500);-webkit-text-stroke:0.20px #d5d2ca">js</span><span class="tx" id="pg" style="left:182.20px;top:17.99px;font-size:17.50px;font-weight:normal;color:#d5d2ca;transform:scaleX(0.8600);-webkit-text-stroke:0.30px #d5d2ca">Playground</span><span class="tx" id="ver" style="left:262.70px;top:17.99px;font-size:17.50px;font-weight:bold;color:#ffffff;transform:scaleX(0.8480)">5.0.0-beta.7 (WebGL2)</span><span class="tx" id="tst" style="left:469.50px;top:17.79px;font-size:16.90px;font-weight:normal;color:#ffffff;transform:scaleX(0.6650);-webkit-text-stroke:0.35px #ffffff">TS</span><span class="tx" id="jst" style="left:545.70px;top:17.79px;font-size:16.90px;font-weight:normal;color:#ffffff;transform:scaleX(0.7830);-webkit-text-stroke:0.35px #ffffff">Javascript</span><span class="tx" id="webgl" style="left:1149.80px;top:19.81px;font-size:13.10px;font-weight:normal;color:#8d77ec;transform:scaleX(0.7200);-webkit-text-stroke:0.40px #8d77ec">WEBGL2</span><span class="tx" id="v5" style="left:1213.60px;top:19.81px;font-size:13.10px;font-weight:normal;color:#8d77ec;transform:scaleX(0.7240);-webkit-text-stroke:0.40px #8d77ec">5.0.0</span><span class="tx" id="fps" style="left:1250.20px;top:838.89px;font-size:15.60px;font-weight:normal;color:#ffffff;transform:scaleX(0.7750);-webkit-text-stroke:0.35px #ffffff">60 fps</span>
<div class="abs" style="left:0;top:0;width:1px;height:857px;background:rgba(255,255,255,0.1)"></div>
</body></html>
